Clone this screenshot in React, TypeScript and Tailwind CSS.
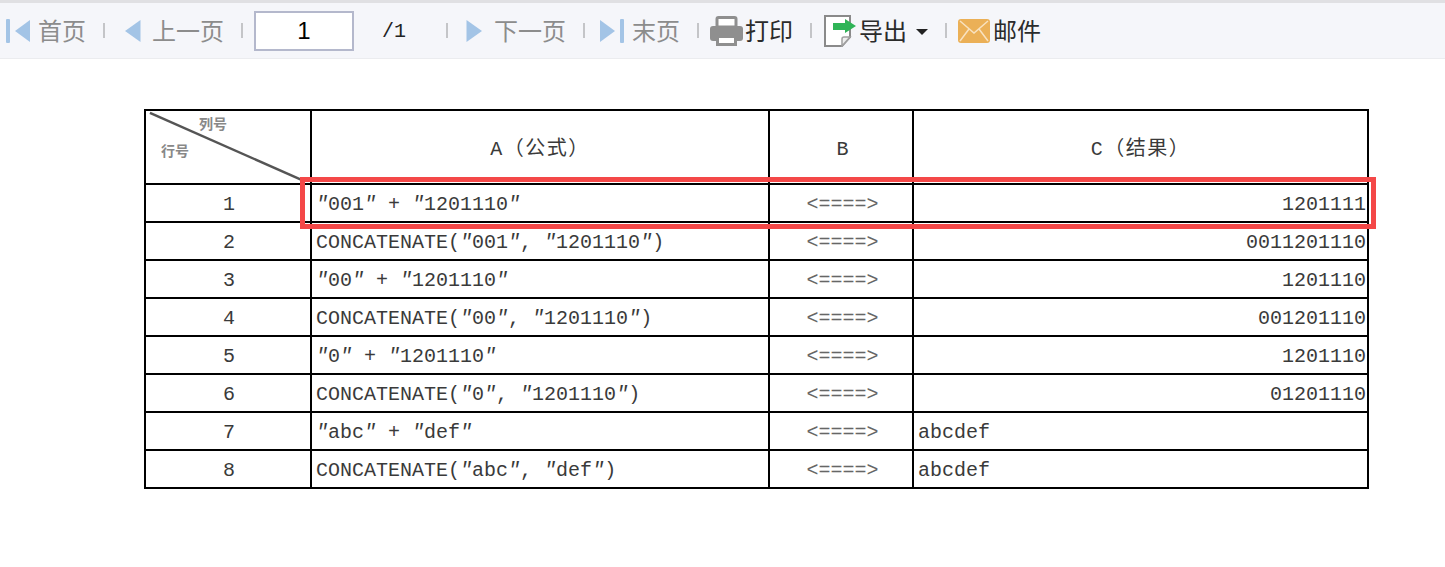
const mono = "font-['Liberation_Mono','Noto_Sans_CJK_SC',monospace]";

const rows = [
  { n: 1, a: "″001″ + ″1201110″", c: "1201111", right: true },
  { n: 2, a: "CONCATENATE(″001″, ″1201110″)", c: "0011201110", right: true },
  { n: 3, a: "″00″ + ″1201110″", c: "1201110", right: true },
  { n: 4, a: "CONCATENATE(″00″, ″1201110″)", c: "001201110", right: true },
  { n: 5, a: "″0″ + ″1201110″", c: "1201110", right: true },
  { n: 6, a: "CONCATENATE(″0″, ″1201110″)", c: "01201110", right: true },
  { n: 7, a: "″abc″ + ″def″", c: "abcdef", right: false },
  { n: 8, a: "CONCATENATE(″abc″, ″def″)", c: "abcdef", right: false },
];

// the quotes in the picture lean over, so they go in as italic ascii quotes
function Formula({ text }: { text: string }) {
  const parts = text.split("″");
  return (
    <>
      {parts.map((p, i) => (
        <span key={i}>
          {i > 0 && <span className="italic">"</span>}
          {p}
        </span>
      ))}
    </>
  );
}

function Sep({ left }: { left: number }) {
  return <span className="h-[15px] w-[2px] shrink-0 bg-[#c4c5c8]" style={{ marginLeft: left }} />;
}

function Label({ children, dark }: { children: string; dark?: boolean }) {
  return (
    <span className={`-mt-[2px] block text-[24px] leading-none whitespace-nowrap ${dark ? "text-[#2b2b2b]" : "text-[#8c8c8c]"}`}>
      {children}
    </span>
  );
}

function FirstIcon() {
  return (
    <svg width="24" height="24" viewBox="0 0 24 24" className="shrink-0 blur-[0.4px]">
      <rect x="0" y="0" width="4" height="24" rx="1" fill="#a3c4e6" />
      <path d="M24 1 V23 L9 12 Z" fill="#a3c4e6" />
    </svg>
  );
}

function PrevIcon() {
  return (
    <svg width="16" height="24" viewBox="0 0 16 24" className="shrink-0 blur-[0.4px]">
      <path d="M15.5 1 V23 L0 12 Z" fill="#a3c4e6" />
    </svg>
  );
}

function NextIcon() {
  return (
    <svg width="16" height="24" viewBox="0 0 16 24" className="shrink-0 blur-[0.4px]">
      <path d="M0.5 1 V23 L16 12 Z" fill="#a3c4e6" />
    </svg>
  );
}

function LastIcon() {
  return (
    <svg width="24" height="24" viewBox="0 0 24 24" className="shrink-0 blur-[0.4px]">
      <path d="M0 1 V23 L15 12 Z" fill="#a3c4e6" />
      <rect x="20" y="0" width="4" height="24" rx="1" fill="#a3c4e6" />
    </svg>
  );
}

function PrintIcon() {
  return (
    <svg width="33" height="30" viewBox="0 0 33 30" className="shrink-0 blur-[0.4px]">
      <path d="M7 11 V3 Q7 1.5 8.5 1.5 H24.5 Q26 1.5 26 3 V11 Z" fill="#fff" stroke="#8f8f8f" strokeWidth="3" />
      <path d="M3 10 H30 Q33 10 33 13 V22 Q33 25 30 25 H3 Q0 25 0 22 V13 Q0 10 3 10 Z" fill="#8f8f8f" />
      <rect x="7.5" y="20.5" width="18" height="8" fill="#fff" stroke="#8f8f8f" strokeWidth="3" />
    </svg>
  );
}

function ExportIcon() {
  return (
    <svg width="32" height="32" viewBox="0 0 32 32" className="shrink-0 blur-[0.3px]">
      <path d="M1 1 H26 V22 L18 31 H1 Z" fill="#fff" stroke="#8a8a8a" strokeWidth="2" />
      <path d="M26 22 L18 31 V24 Q18 22 20 22 Z" fill="#eee" stroke="#a0a0a0" strokeWidth="1.5" />
      <path d="M9 8 H21 V4 L32 11 L21 18 V15 H9 Z" fill="#2fb457" />
    </svg>
  );
}

function MailIcon() {
  return (
    <svg width="32" height="24" viewBox="0 0 32 24" className="shrink-0 blur-[0.3px]">
      <rect width="32" height="24" rx="3" fill="#ebb057" />
      <path d="M2 2 L16 14 L30 2 M2 22 L11 10 M30 22 L21 10" fill="none" stroke="#f8e2c0" strokeWidth="1.5" />
    </svg>
  );
}

function Toolbar() {
  return (
    <div className="flex h-[59px] items-center border-t-[3px] border-b border-t-[#e0e0e3] border-b-[#ebecef] bg-[#f5f6fa] pl-[6px] font-['Noto_Sans_CJK_SC',sans-serif]">
      <FirstIcon />
      <span className="ml-2"><Label>首页</Label></span>
      <Sep left={17} />
      <span className="ml-5"><PrevIcon /></span>
      <span className="ml-[11px]"><Label>上一页</Label></span>
      <Sep left={17} />
      <input
        readOnly
        value="1"
        className="ml-[11px] h-[40px] w-[100px] border-2 border-[#b4b8cc] bg-white text-center font-['Liberation_Sans',sans-serif] text-[24px] text-black outline-none"
      />
      <span className={`mt-[2px] ml-[28px] w-[22px] text-[20px] text-[#222] ${mono}`}>/1</span>
      <Sep left={42} />
      <span className="ml-[18px]"><NextIcon /></span>
      <span className="ml-3"><Label>下一页</Label></span>
      <Sep left={17} />
      <span className="ml-[15px]"><LastIcon /></span>
      <span className="ml-2"><Label>末页</Label></span>
      <Sep left={17} />
      <span className="ml-[11px]"><PrintIcon /></span>
      <span className="ml-[2px]"><Label dark>打印</Label></span>
      <Sep left={17} />
      <span className="ml-3"><ExportIcon /></span>
      <span className="ml-[3px]"><Label dark>导出</Label></span>
      <span className="mt-[2px] ml-[9px] h-0 w-0 border-x-[6px] border-t-[6px] border-x-transparent border-t-[#222]" />
      <Sep left={17} />
      <span className="ml-[11px]"><MailIcon /></span>
      <span className="ml-[3px]"><Label dark>邮件</Label></span>
    </div>
  );
}

export default function App() {
  const cell = "border-2 border-black p-0";
  return (
    <div className="min-h-[567px] bg-white">
      <Toolbar />
      <div className="pt-[50px] pl-[144px]">
        <div className="relative w-[1223px]">
          <table className={`w-[1223px] table-fixed border-collapse text-[20px] text-[#3a3a3a] ${mono}`}>
            <colgroup>
              <col className="w-[166px]" />
              <col className="w-[458px]" />
              <col className="w-[144px]" />
              <col className="w-[455px]" />
            </colgroup>
            <thead>
              <tr className="h-[74px]">
                <th className={`${cell} relative font-normal`}>
                  <svg className="absolute inset-0 h-full w-full" viewBox="0 0 166 74" preserveAspectRatio="none">
                    <line x1="4" y1="2" x2="158" y2="71" stroke="#555" strokeWidth="2.5" />
                  </svg>
                  <span className="absolute top-[2px] left-[53px] font-['Noto_Sans_CJK_SC',sans-serif] text-[14px] font-bold text-[#888]">列号</span>
                  <span className="absolute top-[29px] left-[15px] font-['Noto_Sans_CJK_SC',sans-serif] text-[14px] font-bold text-[#888]">行号</span>
                </th>
                <th className={`${cell} pt-[5px] font-normal tracking-[1.5px]`}>A（公式）</th>
                <th className={`${cell} pt-[5px] pl-[3px] font-normal`}>B</th>
                <th className={`${cell} pt-[5px] font-normal tracking-[1.5px]`}>C（结果）</th>
              </tr>
            </thead>
            <tbody>
              {rows.map((r) => (
                <tr key={r.n} className="h-[38px]">
                  <td className={`${cell} pt-1 pl-[2px] text-center`}>{r.n}</td>
                  <td className={`${cell} pt-1 pl-1 whitespace-nowrap`}>
                    <Formula text={r.a} />
                  </td>
                  <td className={`${cell} pt-1 pl-[3px] text-center text-[#666]`}>{"<====>"}</td>
                  <td className={`${cell} pt-1 pr-[1px] pl-1 ${r.right ? "text-right" : "text-left"}`}>{r.c}</td>
                </tr>
              ))}
            </tbody>
          </table>
          <div className="pointer-events-none absolute top-[68px] left-[156px] h-[52px] w-[1076px] border-[5px] border-[#f44848]" />
        </div>
      </div>
    </div>
  );
}
